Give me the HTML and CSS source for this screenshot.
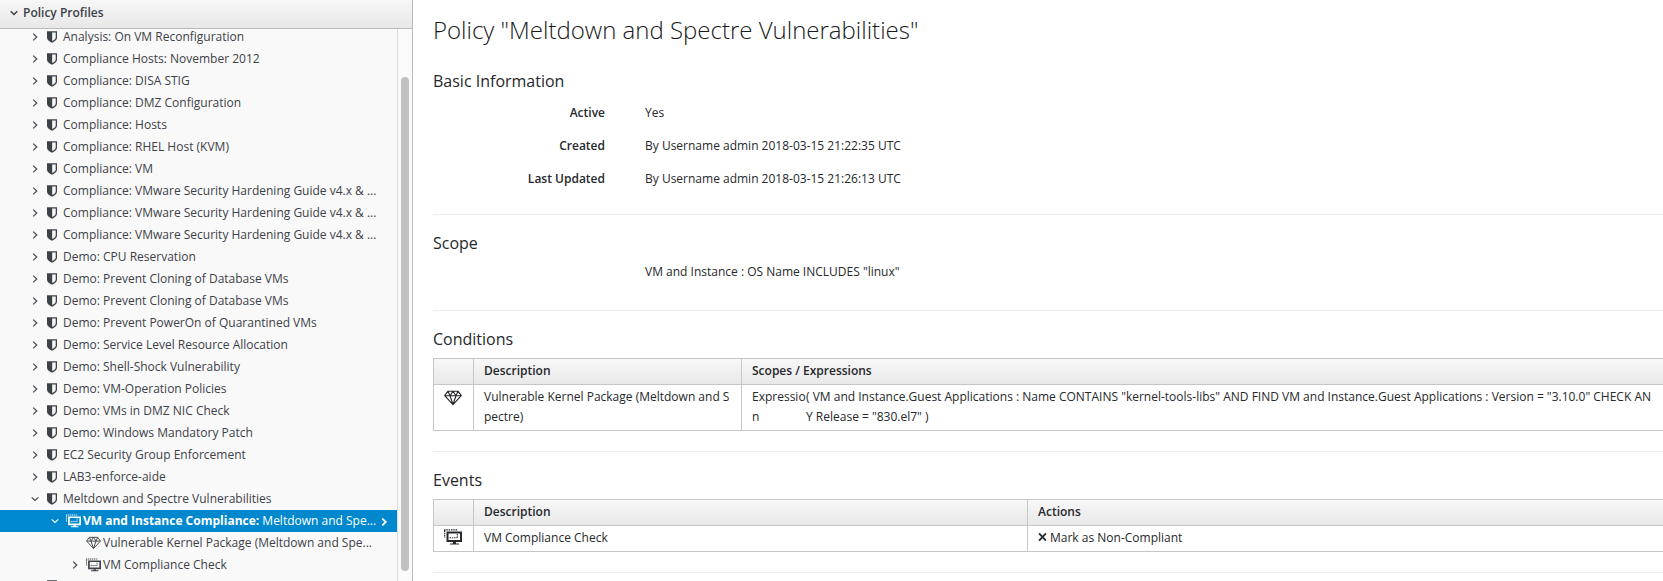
FILE: index.html
```
<!DOCTYPE html>
<html lang="en">
<head>
<meta charset="utf-8">
<title>Policy Profiles</title>
<link rel="stylesheet" href="styles.css">
</head>
<body>
<svg class="defs" aria-hidden="true">
  <symbol id="right" viewBox="0 0 8 8"><path d="M2.200 .6 5.800 4 2.200 7.400" fill="none" stroke="currentColor"/></symbol>
  <symbol id="down" viewBox="0 0 8 8"><path d="M.7 2.300 4 5.500 7.300 2.300" fill="none" stroke="currentColor"/></symbol>
  <symbol id="shield" viewBox="0 0 10 12"><path fill-rule="evenodd" d="M0 .3H10V6.800C10 9 7.800 10.600 5 11.700 2.200 10.600 0 9 0 6.800ZM5.200 1.500V10C7.300 9 8.700 8 8.700 6.500V1.500Z" fill="currentColor"/></symbol>
  <symbol id="gem" viewBox="0 0 18 15"><path d="M4 .7H14L17.300 5.200 9 14.200 .7 5.200ZM.7 5.200H17.300M4 .7 6 5.200 9 .7 12 5.200 14 .7M6 5.200 9 14 12 5.200" fill="none" stroke="currentColor" stroke-width="1.100" stroke-linejoin="round"/></symbol>
  <symbol id="vm" viewBox="0 0 18 16"><path d="M0 .8H14M.7 1.500V9" fill="none" stroke="currentColor" stroke-width="1.200" stroke-dasharray="1.500 .8"/><path fill-rule="evenodd" d="M2.500 2.500H18V13H2.500ZM4.500 4.500V11H16V4.500Z" fill="currentColor"/><path d="M5.500 8.700H13M13.300 5V9" fill="none" stroke="currentColor" stroke-width="1.100" stroke-dasharray="1.500 .8"/><path d="M9 13H12V14.400H15V15.600H6V14.400H9Z" fill="currentColor"/></symbol>
</svg>
<div class="app">
  <aside class="sidebar">
    <header class="panel-head"><svg class="chev"><use href="#down"/></svg>Policy Profiles</header>
    <div class="scroller">
      <ul class="tree">
        <li><svg class="chev"><use href="#right"/></svg><svg class="shield"><use href="#shield"/></svg><span>Analysis: On VM Reconfiguration</span></li>
        <li><svg class="chev"><use href="#right"/></svg><svg class="shield"><use href="#shield"/></svg><span>Compliance Hosts: November 2012</span></li>
        <li><svg class="chev"><use href="#right"/></svg><svg class="shield"><use href="#shield"/></svg><span>Compliance: DISA STIG</span></li>
        <li><svg class="chev"><use href="#right"/></svg><svg class="shield"><use href="#shield"/></svg><span>Compliance: DMZ Configuration</span></li>
        <li><svg class="chev"><use href="#right"/></svg><svg class="shield"><use href="#shield"/></svg><span>Compliance: Hosts</span></li>
        <li><svg class="chev"><use href="#right"/></svg><svg class="shield"><use href="#shield"/></svg><span>Compliance: RHEL Host (KVM)</span></li>
        <li><svg class="chev"><use href="#right"/></svg><svg class="shield"><use href="#shield"/></svg><span>Compliance: VM</span></li>
        <li><svg class="chev"><use href="#right"/></svg><svg class="shield"><use href="#shield"/></svg><span>Compliance: VMware Security Hardening Guide v4.x &amp; ...</span></li>
        <li><svg class="chev"><use href="#right"/></svg><svg class="shield"><use href="#shield"/></svg><span>Compliance: VMware Security Hardening Guide v4.x &amp; ...</span></li>
        <li><svg class="chev"><use href="#right"/></svg><svg class="shield"><use href="#shield"/></svg><span>Compliance: VMware Security Hardening Guide v4.x &amp; ...</span></li>
        <li><svg class="chev"><use href="#right"/></svg><svg class="shield"><use href="#shield"/></svg><span>Demo: CPU Reservation</span></li>
        <li><svg class="chev"><use href="#right"/></svg><svg class="shield"><use href="#shield"/></svg><span>Demo: Prevent Cloning of Database VMs</span></li>
        <li><svg class="chev"><use href="#right"/></svg><svg class="shield"><use href="#shield"/></svg><span>Demo: Prevent Cloning of Database VMs</span></li>
        <li><svg class="chev"><use href="#right"/></svg><svg class="shield"><use href="#shield"/></svg><span>Demo: Prevent PowerOn of Quarantined VMs</span></li>
        <li><svg class="chev"><use href="#right"/></svg><svg class="shield"><use href="#shield"/></svg><span>Demo: Service Level Resource Allocation</span></li>
        <li><svg class="chev"><use href="#right"/></svg><svg class="shield"><use href="#shield"/></svg><span>Demo: Shell-Shock Vulnerability</span></li>
        <li><svg class="chev"><use href="#right"/></svg><svg class="shield"><use href="#shield"/></svg><span>Demo: VM-Operation Policies</span></li>
        <li><svg class="chev"><use href="#right"/></svg><svg class="shield"><use href="#shield"/></svg><span>Demo: VMs in DMZ NIC Check</span></li>
        <li><svg class="chev"><use href="#right"/></svg><svg class="shield"><use href="#shield"/></svg><span>Demo: Windows Mandatory Patch</span></li>
        <li><svg class="chev"><use href="#right"/></svg><svg class="shield"><use href="#shield"/></svg><span>EC2 Security Group Enforcement</span></li>
        <li><svg class="chev"><use href="#right"/></svg><svg class="shield"><use href="#shield"/></svg><span>LAB3-enforce-aide</span></li>
        <li><svg class="chev"><use href="#down"/></svg><svg class="shield"><use href="#shield"/></svg><span>Meltdown and Spectre Vulnerabilities</span></li>
        <li class="level2 selected"><svg class="chev"><use href="#down"/></svg><svg class="item-icon"><use href="#vm"/></svg><span><b>VM and Instance Compliance:</b> Meltdown and Spe...</span><svg class="chev go"><use href="#right"/></svg></li>
        <li class="level3"><i class="chev"></i><svg class="item-icon"><use href="#gem"/></svg><span>Vulnerable Kernel Package (Meltdown and Spe...</span></li>
        <li class="level3"><svg class="chev"><use href="#right"/></svg><svg class="item-icon"><use href="#vm"/></svg><span>VM Compliance Check</span></li>
        <li class="cut"><i class="chev"></i><svg class="shield"><use href="#shield"/></svg></li>
      </ul>
      <div class="track"><div class="thumb"></div></div>
    </div>
  </aside>
  <main class="content">
    <h1>Policy "Meltdown and Spectre Vulnerabilities"</h1>
    <section class="basic">
      <h3>Basic Information</h3>
      <dl>
        <dt>Active</dt><dd>Yes</dd>
        <dt>Created</dt><dd>By Username admin 2018-03-15 21:22:35 UTC</dd>
        <dt>Last Updated</dt><dd>By Username admin 2018-03-15 21:26:13 UTC</dd>
      </dl>
    </section>
    <section class="scope">
      <h3>Scope</h3>
      <p>VM and Instance : OS Name INCLUDES "linux"</p>
    </section>
    <section class="conditions">
      <h3>Conditions</h3>
      <div class="table">
        <div class="row head"><div></div><div>Description</div><div>Scopes / Expressions</div></div>
        <div class="row">
          <div class="icon-cell"><svg class="cell-icon"><use href="#gem"/></svg></div>
          <div>Vulnerable Kernel Package (Meltdown and S<br>pectre)</div>
          <div class="expression"><span>Expressio<br>n</span><span>( VM and Instance.Guest Applications : Name CONTAINS "kernel-tools-libs" AND FIND VM and Instance.Guest Applications : Version = "3.10.0" CHECK AN<br>Y Release = "830.el7" )</span></div>
        </div>
      </div>
    </section>
    <section class="events">
      <h3>Events</h3>
      <div class="table">
        <div class="row head"><div></div><div>Description</div><div>Actions</div></div>
        <div class="row">
          <div class="icon-cell"><svg class="cell-icon"><use href="#vm"/></svg></div>
          <div>VM Compliance Check</div>
          <div class="action"><svg class="cross" viewBox="0 0 10 10"><path d="M1.200 1 8.800 9M8.800 1 1.200 9" stroke="currentColor" stroke-width="2"/></svg>Mark as Non-Compliant</div>
        </div>
      </div>
    </section>
  </main>
</div>
</body>
</html>
```
FILE: styles.css
```
* { box-sizing: border-box; }
body {
  margin: 0;
  overflow: hidden;
  background: #fff;
  color: #26282b;
  font: 12px/20px "Open Sans", sans-serif;
}
.defs { display: none; }
.app { display: flex; width: 1663px; height: 581px; overflow: hidden; }
svg { flex: none; }

.sidebar {
  flex: none;
  display: flex;
  flex-direction: column;
  width: 413px;
  border-right: 1px solid #bbb;
  background: #f9f9f9;
  color: #3d4148;
}
.panel-head {
  flex: none;
  display: flex;
  align-items: center;
  height: 29px;
  padding: 0 0 3px 10px;
  border-bottom: 1px solid #bbb;
  background: linear-gradient(#f7f7f7, #e8e8e8);
  font-weight: 600;
}
.panel-head .chev { margin-right: 5px; stroke-width: 1.5; }
.chev { flex: none; width: 8px; height: 8px; stroke-width: 1.1; }
.scroller { flex: 1; display: flex; min-height: 0; overflow: hidden; }
.tree {
  flex: none;
  width: 398px;
  margin: -3px 0 0;
  padding: 0;
  border-right: 1px solid #ddd;
  list-style: none;
}
.tree li {
  display: flex;
  align-items: center;
  height: 22px;
  padding-left: 31px;
  white-space: nowrap;
}
.shield { width: 10px; height: 12px; margin: 0 6px 0 8px; }
.item-icon { width: 15px; height: 14px; margin: 0 2px 1px 7px; }
.tree .level2 { padding-left: 51px; }
.tree .level3 { padding-left: 71px; }
.tree .selected { background: #0088ce; color: #fff; }
.selected b { font-weight: 700; }
.selected .go { margin: 2px 0 0 4px; stroke-width: 1.8; }
.cut .shield { margin-bottom: 2px; }
.track { flex: 1; padding: 48px 3px 0; background: #fafafa; }
.thumb { width: 8px; height: 494px; border-radius: 4px; background: #c1c1c1; }

.content { flex: none; width: 1270px; padding-left: 20px; }
h1 { height: 65px; margin: 0; padding-top: 14px; color: #17191b; font-size: 24px; line-height: 32px; font-weight: 300; }
h3 { margin: 0; font-size: 16px; line-height: 32px; font-weight: 400; }
section { border-bottom: 1px solid #ededed; }
.basic { height: 150px; }
dl {
  display: grid;
  grid-template-columns: 172px 1fr;
  grid-auto-rows: 20px;
  gap: 13px 40px;
  margin: 6px 0 0;
}
dt { text-align: right; font-weight: 600; }
dd { margin: 0; }
.scope { height: 96px; padding-top: 12px; }
.scope p { margin: 2px 0 0; padding-left: 212px; line-height: 22px; }
.conditions { height: 141px; padding-top: 12px; }
.events { height: 121px; padding-top: 12px; }
.table { margin-top: 3px; border: solid #c6c6c6; border-width: 1px 0 0 1px; }
.row { display: grid; border-bottom: 1px solid #c6c6c6; }
.conditions .row { grid-template-columns: 40px 268px 1fr; }
.events .row { grid-template-columns: 40px 554px 1fr; }
.row > div { min-height: 25px; padding: 2px 10px 3px; border-right: 1px solid #c6c6c6; white-space: nowrap; }
.head > div { background: linear-gradient(#f8f8f8, #e8e8e8); font-weight: 600; }
.row > .icon-cell { padding: 5px 0 0 10px; }
.events .row > .icon-cell { padding-top: 3px; }
.cell-icon { display: block; width: 18px; height: 16px; }
.row > .expression { display: grid; grid-template-columns: 54px 1fr; }
.conditions .row:last-child > div { min-height: 45px; }
.row > .action { display: flex; align-items: center; }
.cross { width: 9px; height: 10px; margin: 0 3px 2px 0; }
```
